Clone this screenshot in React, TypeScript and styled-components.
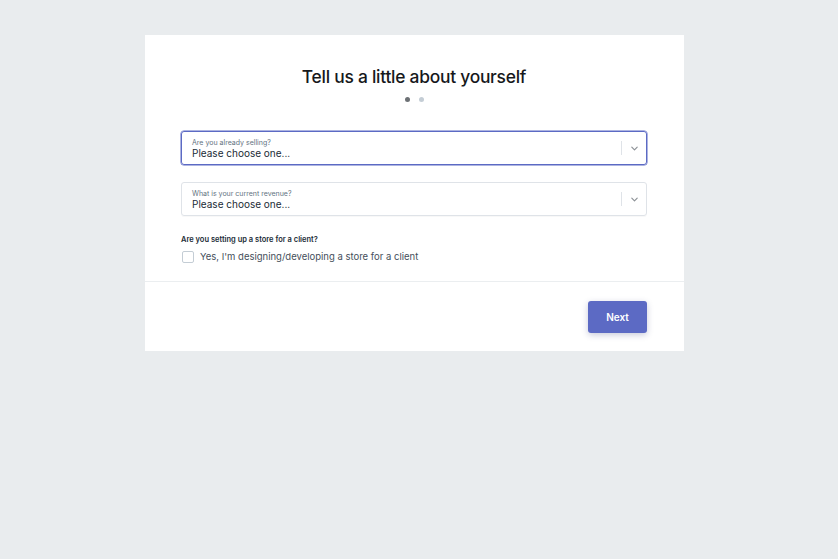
import styled, { createGlobalStyle } from "styled-components";

const GlobalStyle = createGlobalStyle`
  html, body {
    margin: 0;
    padding: 0;
    background: #e9ecee;
    font-family: Inter, "Noto Sans", "Liberation Sans", sans-serif;
  }
`;

function Chevron() {
  return (
    <svg width="9" height="9" viewBox="0 0 10 10" fill="none">
      <path d="M2 3.5 L5 6.5 L8 3.5" stroke="#8c9196" strokeWidth="1.3" strokeLinecap="round" strokeLinejoin="round" />
    </svg>
  );
}

function Select({ label, focused }: { label: string; focused?: boolean }) {
  return (
    <SSelect $focused={focused}>
      <SSelectText>
        <SSelectLabel>{label}</SSelectLabel>
        <SSelectValue>Please choose one...</SSelectValue>
      </SSelectText>
      <SSelectDivider />
      <SChevronBox>
        <Chevron />
      </SChevronBox>
    </SSelect>
  );
}

export default function App() {
  return (
    <>
      <GlobalStyle />
      <SPage>
        <SCard>
          <SBody>
            <STitle>Tell us a little about yourself</STitle>
            <SDots>
              <SDot $active />
              <SDot />
            </SDots>
            <SFields>
              <Select label="Are you already selling?" focused />
              <Select label="What is your current revenue?" />
            </SFields>
            <SQuestion>Are you setting up a store for a client?</SQuestion>
            <SCheckRow>
              <SCheckbox />
              <SCheckLabel>Yes, I'm designing/developing a store for a client</SCheckLabel>
            </SCheckRow>
          </SBody>
          <SFooter>
            <SButton>Next</SButton>
          </SFooter>
        </SCard>
      </SPage>
    </>
  );
}

const SPage = styled.div`
  min-height: 559px;
  padding-top: 35px;
  box-sizing: border-box;
`;

const SCard = styled.div`
  width: 539px;
  margin-left: 145px;
  background: #fff;
`;

const SBody = styled.div`
  padding: 31px 37px 18px 36px;
  display: flex;
  flex-direction: column;
`;

const STitle = styled.h1`
  margin: 0;
  text-align: center;
  font-size: 17.4px;
  font-weight: 500;
  color: #16181b;
  letter-spacing: -0.25px;
  line-height: 22px;
`;

const SDots = styled.div`
  display: flex;
  justify-content: center;
  gap: 9px;
  margin-top: 9px;
  margin-left: 1px;
`;

const SDot = styled.span<{ $active?: boolean }>`
  width: 5px;
  height: 5px;
  border-radius: 50%;
  background: ${(p) => (p.$active ? "#6d7175" : "#c4cdd5")};
`;

const SFields = styled.div`
  display: flex;
  flex-direction: column;
  gap: 17px;
  margin-top: 29px;
`;

const SSelect = styled.div<{ $focused?: boolean }>`
  height: 34px;
  box-sizing: border-box;
  border: 1px solid ${(p) => (p.$focused ? "#5c6ac4" : "#dfe3e8")};
  border-radius: 3px;
  box-shadow: ${(p) => (p.$focused ? "0 0 0 0.5px #5c6ac4" : "0 1px 0 rgba(22,29,37,0.03)")};
  display: flex;
  align-items: center;
  padding-left: 10px;
`;

const SSelectText = styled.div`
  flex: 1;
  display: flex;
  flex-direction: column;
  padding-top: 2px;
`;

const SSelectLabel = styled.span`
  font-size: 7px;
  line-height: 9px;
  color: #637381;
`;

const SSelectValue = styled.span`
  font-size: 10px;
  line-height: 13px;
  color: #212b36;
`;

const SSelectDivider = styled.span`
  width: 1px;
  height: 14px;
  background: #dfe3e8;
`;

const SChevronBox = styled.span`
  width: 24px;
  display: flex;
  justify-content: center;
  align-items: center;
`;

const SQuestion = styled.div`
  margin-top: 19px;
  font-size: 7.5px;
  font-weight: 600;
  color: #212b36;
  line-height: 10px;
`;

const SCheckRow = styled.label`
  display: flex;
  align-items: center;
  gap: 6px;
  margin-top: 5px;
  margin-left: 1px;
`;

const SCheckbox = styled.span`
  width: 12px;
  height: 12px;
  box-sizing: border-box;
  border: 1px solid #c4cdd5;
  border-radius: 2px;
  background: #fff;
`;

const SCheckLabel = styled.span`
  font-size: 9.5px;
  color: #454f5b;
  line-height: 13px;
`;

const SFooter = styled.div`
  border-top: 1px solid #ebeef0;
  height: 70px;
  box-sizing: border-box;
  display: flex;
  justify-content: flex-end;
  align-items: center;
  padding-right: 37px;
`;

const SButton = styled.button`
  width: 59px;
  height: 32px;
  border: none;
  border-radius: 3px;
  background: #5c6ac4;
  color: #fff;
  font-family: inherit;
  font-size: 10px;
  font-weight: 600;
  box-shadow: 0 2px 6px rgba(38, 46, 110, 0.25);
  cursor: pointer;
`;
